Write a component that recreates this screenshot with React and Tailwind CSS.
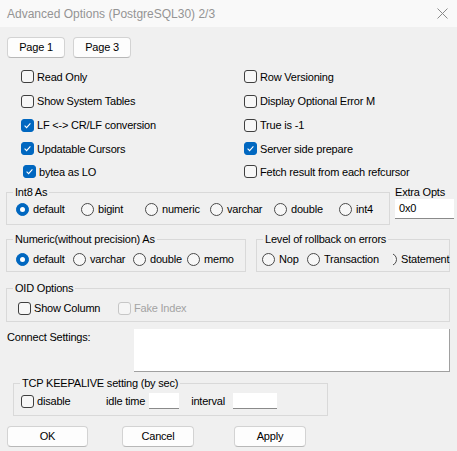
import clsx from "clsx";

const NARROW = "font-['Liberation_Sans',sans-serif] text-[11px] tracking-[-0.2px]";
const TAHOMA = "font-['Liberation_Sans',sans-serif] text-[11px] tracking-[-0.2px]";

const Check = ({ checked, disabled, label, font = NARROW, className }) => (
  <div className={clsx("flex items-center h-[16px]", className)}>
    <span
      className={clsx(
        "w-[13px] h-[13px] rounded-[3px] border flex items-center justify-center shrink-0",
        checked
          ? "bg-[#0067c0] border-[#0067c0]"
          : disabled
          ? "bg-[#f5f5f5] border-[#c6c6c6]"
          : "bg-[#f7f7f7] border-[#3f3f3f]"
      )}
    >
      {checked && (
        <svg width="9" height="9" viewBox="0 0 9 9">
          <path d="M1.6 4.7 L3.6 6.6 L7.4 2.4" fill="none" stroke="white" strokeWidth="1.1" />
        </svg>
      )}
    </span>
    <span className={clsx("ml-[3px] whitespace-nowrap leading-[16px]", font, disabled ? "text-[#a3a3a3]" : "text-black")}>
      {label}
    </span>
  </div>
);

const Radio = ({ checked, label, font = TAHOMA, className }) => (
  <div className={clsx("flex items-center h-[16px]", className)}>
    <span
      className={clsx(
        "w-[13px] h-[13px] rounded-full border flex items-center justify-center shrink-0",
        checked ? "bg-[#0067c0] border-[#0067c0]" : "bg-[#f7f7f7] border-[#4a4a4a]"
      )}
    >
      {checked && <span className="w-[5px] h-[5px] rounded-full bg-white" />}
    </span>
    <span className={clsx("ml-[4px] whitespace-nowrap leading-[16px]", font)}>{label}</span>
  </div>
);

const Group = ({ title, font = TAHOMA, className, children }) => (
  <fieldset className={clsx("border border-[#d9d9d9]", className)}>
    <legend className={clsx("ml-[6px] px-[2px] leading-[14px] whitespace-nowrap", font)}>{title}</legend>
    {children}
  </fieldset>
);

const Button = ({ children, className }) => (
  <div
    className={clsx(
      "h-[21px] flex items-center justify-center bg-[#fdfdfd] border border-[#d3d3d3] border-b-[#b8b8b8] rounded-[4px] leading-none",
      NARROW,
      className
    )}
  >
    {children}
  </div>
);

export default function App() {
  return (
    <div className="w-[457px] h-[451px] bg-[#f0f0f0] text-black overflow-hidden">
      {/* title bar */}
      <div className="h-[27px] bg-[#f9f9f9] flex items-center justify-between pl-[7px] pr-[9px]">
        <span className="font-['Liberation_Sans',sans-serif] text-[12px] text-[#949494]">
          Advanced Options (PostgreSQL30) 2/3
        </span>
        <svg width="11" height="11" viewBox="0 0 11 11">
          <path d="M0.5 0.5 L10.5 10.5 M10.5 0.5 L0.5 10.5" stroke="#8a8a8a" strokeWidth="1" />
        </svg>
      </div>

      <div className="pl-[6px]">
        <div className="flex mt-[10px] ml-[1px] gap-[8px]">
          <Button className="w-[58px]">Page 1</Button>
          <Button className="w-[58px]">Page 3</Button>
        </div>

        {/* options */}
        <div className="grid grid-cols-[223px_1fr] grid-rows-[25px_24px_24px_23px_23px] items-center mt-[6px] pl-[15px]">
          <Check label="Read Only" />
          <Check label="Row Versioning" />
          <Check label="Show System Tables" />
          <Check label="Display Optional Error M" />
          <Check checked label="LF <-> CR/LF conversion" font={TAHOMA} />
          <Check label="True is -1" font={TAHOMA} />
          <Check checked label="Updatable Cursors" font={TAHOMA} />
          <Check checked label="Server side prepare" font={TAHOMA} />
          <Check checked label="bytea as LO" font={TAHOMA} className="ml-[2px]" />
          <Check label="Fetch result from each refcursor" font={TAHOMA} />
        </div>

        {/* Int8 */}
        <div className="flex mt-[2px]">
          <Group title="Int8 As" className="w-[384px] h-[40px]">
            <div className="flex mt-[2px] pl-[9px]">
              <Radio checked label="default" className="w-[65px]" />
              <Radio label="bigint" className="w-[64px]" />
              <Radio label="numeric" className="w-[65px]" />
              <Radio label="varchar" className="w-[64px]" />
              <Radio label="double" className="w-[65px]" />
              <Radio label="int4" />
            </div>
          </Group>
          <div className="ml-[5px] w-[59px] pt-[1px]">
            <div className={clsx("leading-[13px] whitespace-nowrap", NARROW)}>Extra Opts</div>
            <div className={clsx("h-[20px] bg-white border-b border-[#8a8a8a] pl-[4px] leading-[19px]", NARROW)}>0x0</div>
          </div>
        </div>

        {/* Numeric / rollback */}
        <div className="flex mt-[7px]">
          <Group title="Numeric(without precision) As" className="w-[240px] h-[40px]">
            <div className="flex mt-[5px] pl-[9px]">
              <Radio checked label="default" className="w-[57px]" />
              <Radio label="varchar" className="w-[60px]" />
              <Radio label="double" className="w-[54px]" />
              <Radio label="memo" />
            </div>
          </Group>
          <Group title="Level of rollback on errors" font={NARROW} className="ml-[10px] w-[194px] h-[40px]">
            <div className="flex mt-[5px] pl-[5px]">
              <Radio label="Nop" font={NARROW} className="w-[45px]" />
              <Radio label="Transaction" font={NARROW} className="w-[86px]" />
              <div className="flex items-center h-[16px]">
                <span className="w-[4px] h-[13px] overflow-hidden flex justify-end">
                  <span className="w-[13px] h-[13px] rounded-full border border-[#4a4a4a] bg-[#f7f7f7] shrink-0" />
                </span>
                <span className={clsx("ml-[4px] leading-[16px]", NARROW)}>Statement</span>
              </div>
            </div>
          </Group>
        </div>

        {/* OID */}
        <Group title="OID Options" font={NARROW} className="mt-[9px] w-[444px] h-[41px]">
          <div className="flex mt-[5px] pl-[11px]">
            <Check label="Show Column" className="w-[100px]" />
            <Check disabled label="Fake Index" />
          </div>
        </Group>

        {/* Connect settings */}
        <div className="flex mt-[7px]">
          <div className={clsx("w-[128px] pl-[1px] mt-[2px] leading-[13px]", NARROW)}>Connect Settings:</div>
          <div className="w-[316px] h-[43px] bg-white border-b border-r border-[#a0a0a0]" />
        </div>

        {/* TCP keepalive */}
        <Group title="TCP KEEPALIVE setting (by sec)" font={NARROW} className="mt-[4px] ml-[7px] w-[315px] h-[40px]">
          <div className="flex items-center mt-[3px] pl-[7px]">
            <Check label="disable" className="w-[85px]" />
            <span className={clsx("leading-[16px]", NARROW)}>idle time</span>
            <div className="ml-[4px] w-[30px] h-[16px] bg-white border-b border-[#8a8a8a]" />
            <span className={clsx("ml-[12px] w-[42px] leading-[16px]", NARROW)}>interval</span>
            <div className="w-[44px] h-[16px] bg-white border-b border-[#8a8a8a]" />
          </div>
        </Group>

        {/* buttons */}
        <div className="flex mt-[10px] ml-[1px]">
          <Button className="w-[81px]">OK</Button>
          <Button className="ml-[34px] w-[72px]">Cancel</Button>
          <Button className="ml-[40px] w-[72px]">Apply</Button>
        </div>
      </div>
    </div>
  );
}
